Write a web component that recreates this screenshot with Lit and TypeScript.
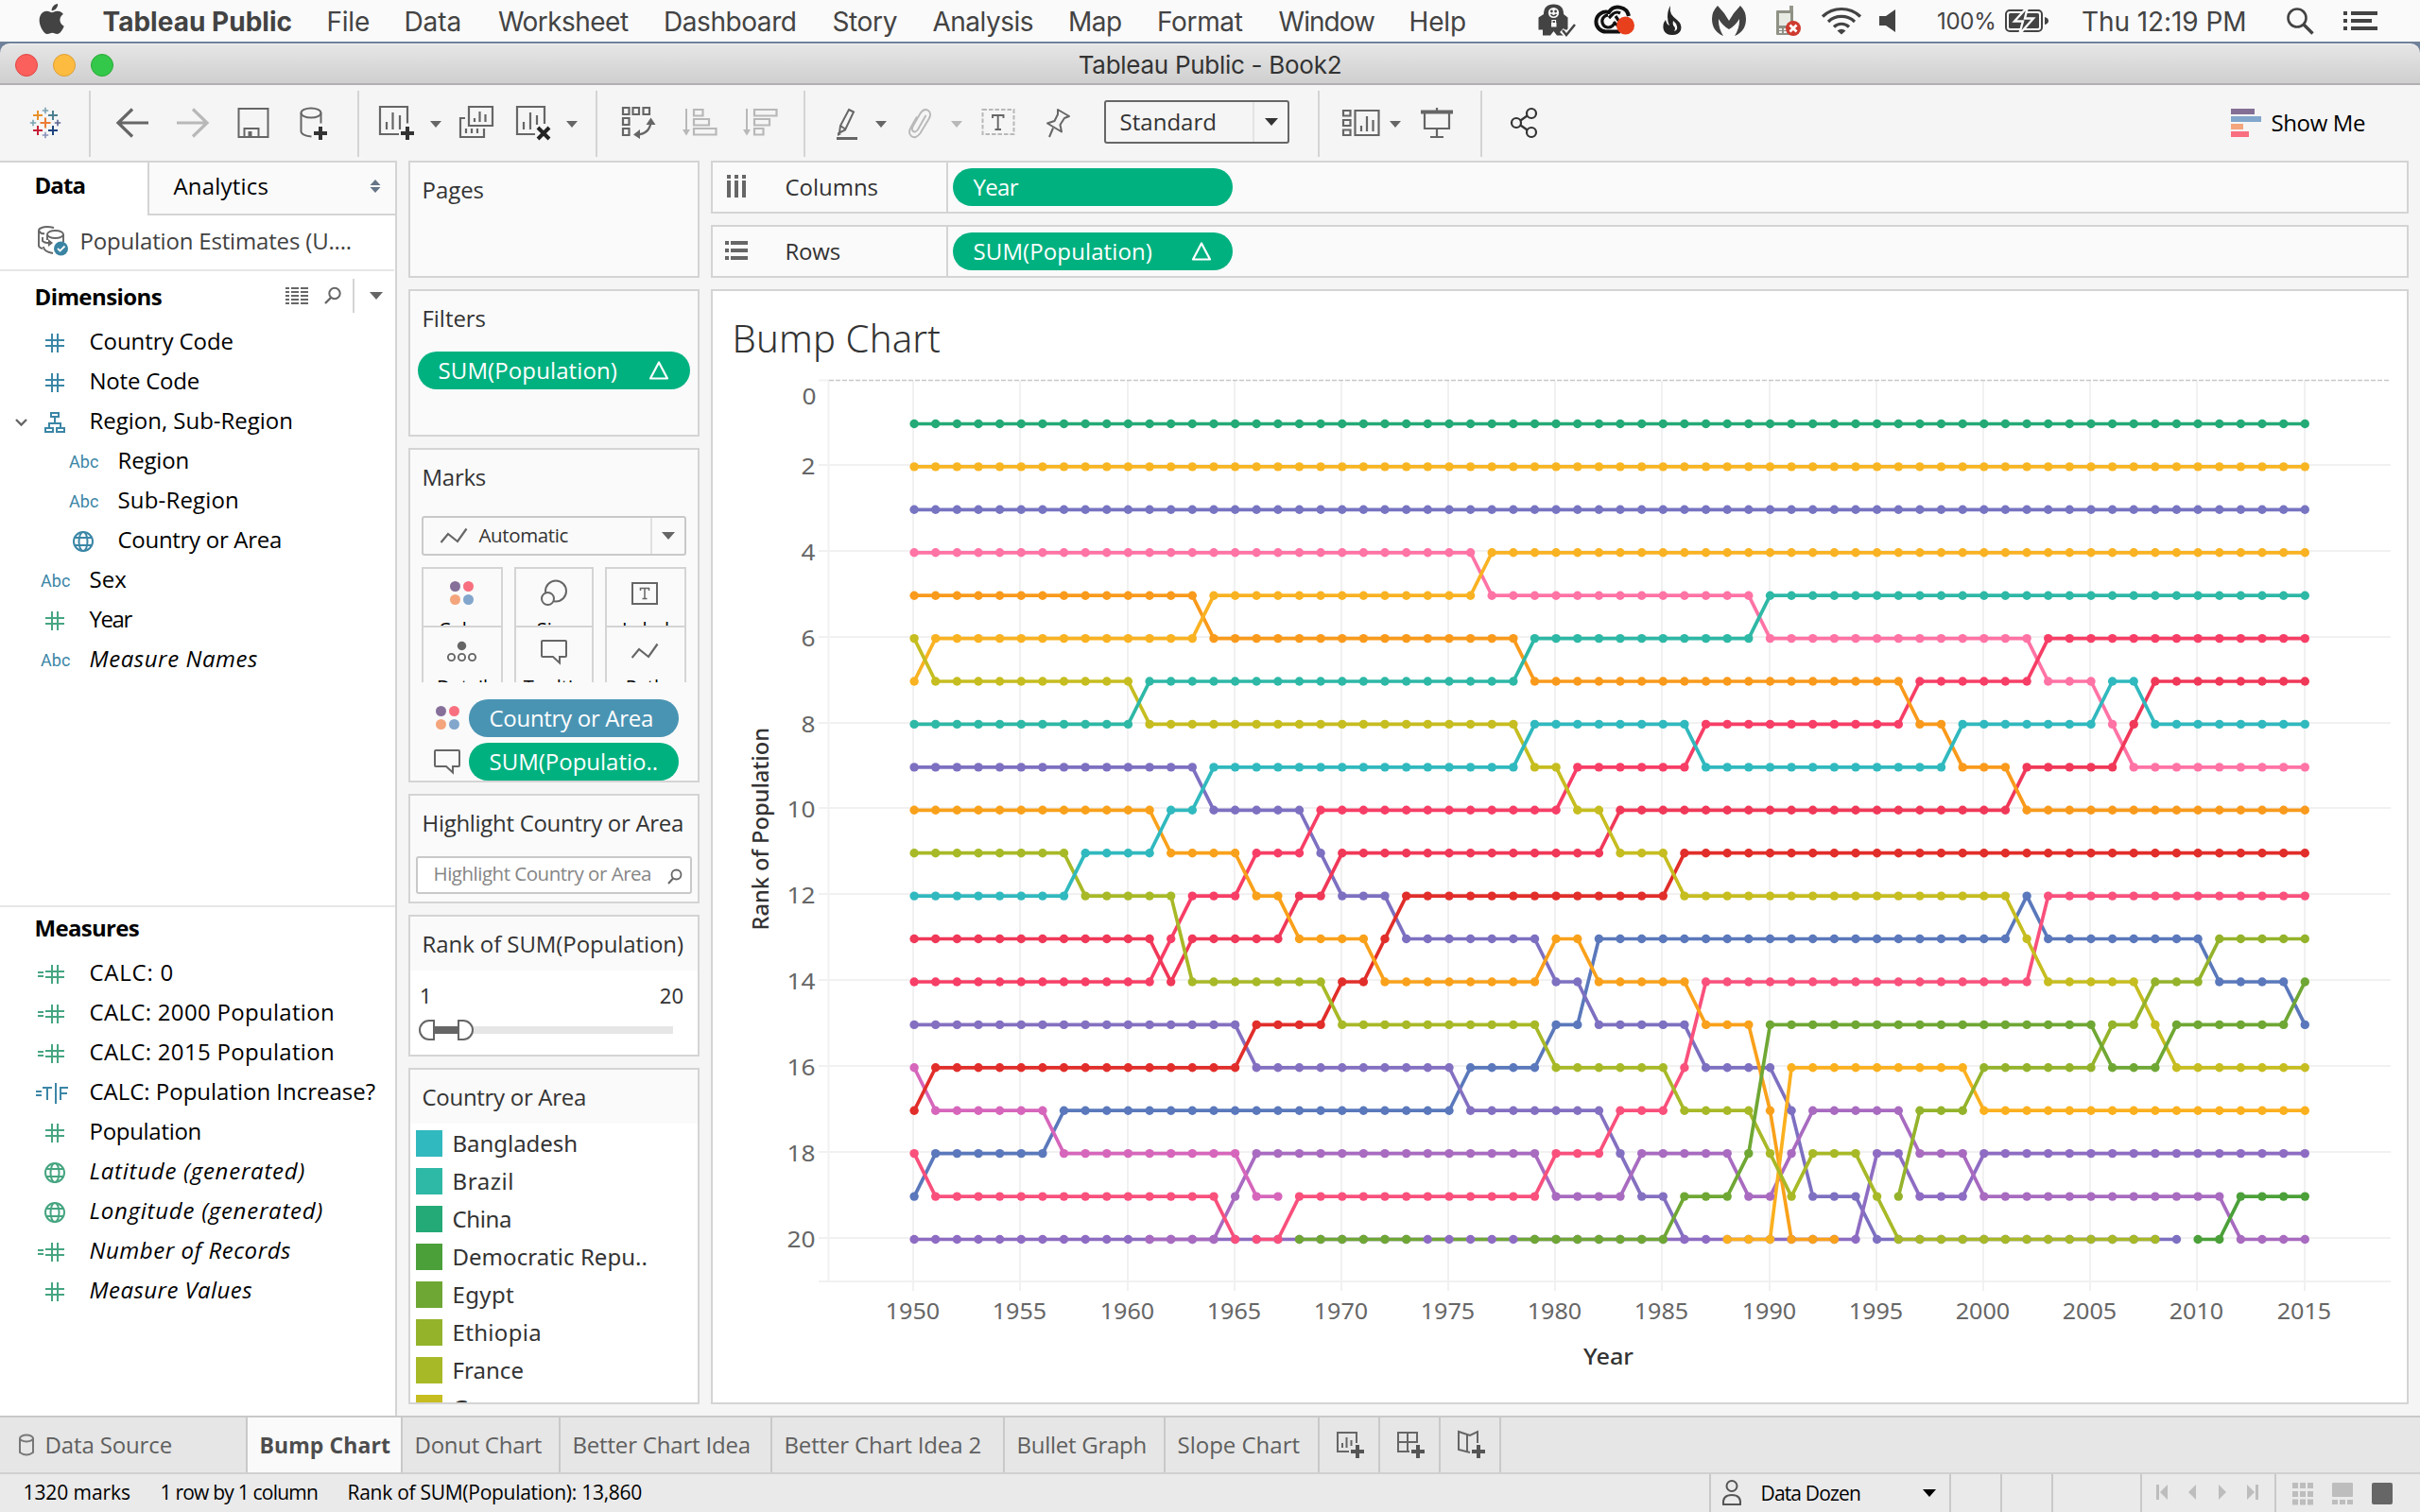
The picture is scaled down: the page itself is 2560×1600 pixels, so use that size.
import { LitElement, html, svg, css, nothing } from "lit";
import { customElement, property } from "lit/decorators.js";
import { classMap } from "lit/directives/class-map.js";

/** Inline label whose tracking is adjusted so that its letters span a given width. */
@customElement("fit-text")
class FitText extends LitElement {
  @property({ type: Number }) w = 0;

  static styles = css`
    :host { display: inline-block; white-space: pre; margin-left: 1.5px; }
  `;

  render() {
    return html`<span class="inner"><slot></slot></span>`;
  }

  firstUpdated() {
    const n = (this.textContent ?? "").length;
    const span = this.renderRoot.querySelector("span");
    if (!this.w || !span || n < 2) return;
    const natural = span.getBoundingClientRect().width;
    this.style.letterSpacing = ((this.w - 1.5 - natural) / n).toFixed(3) + "px";
  }
}

const fit = (text: string, w: number) => html`<fit-text .w=${w}>${text}</fit-text>`;

/** Icon canvas; the origin lets the shapes be written in window coordinates. */
const icon = (x: number, y: number, w: number, h: number, body: unknown) =>
  html`<svg class="icon" width=${w} height=${h} viewBox="${x} ${y} ${w} ${h}" fill="none">${body}</svg>`;

const tool = (x: number, w: number, body: unknown) => icon(x, 106, w, 48, body);
const caret = (x: number, color = "#666") =>
  tool(x, 14, svg`<path d="M${x + 1} 128h12l-6 7z" fill=${color} />`);

/* ---------- field icons, 44 x 42, centred on (22, 24) ---------- */
const hash = svg`<path d="M12 21h20M12 27h20M19 14v20M25 14v20" stroke="currentColor" stroke-width="2" />`;
const equals = svg`<path d="M4 22h6M4 26h6" stroke="currentColor" stroke-width="2" />`;
const globe = svg`<g stroke="currentColor" stroke-width="2"><circle cx="22" cy="24" r="10" /><ellipse cx="22" cy="24" rx="4.5" ry="10" /><path d="M13 20h18M13 28h18" /></g>`;
const tree = svg`<g stroke="currentColor" stroke-width="2"><rect x="18" y="14" width="8" height="4" /><rect x="12" y="30" width="8" height="4" /><rect x="24" y="30" width="8" height="4" /><path d="M22 18v6M16 30v-5h12v5" /></g>`;
const fieldIcons: Record<string, unknown> = {
  hash,
  globe,
  tree,
  calc: svg`${equals}${hash}`,
  bool: svg`<path d="M2 22h6M2 26h6M9 18h10M14 18v13M23 13v22M28 31v-13h8M28 24h7" stroke="currentColor" stroke-width="2" />`,
};

interface Field { icon: string; tone: string; name: string; w: number; depth?: number; italic?: boolean; open?: boolean }

const dimensions: Field[] = [
  { icon: "hash", tone: "blue", name: "Country Code", w: 154 },
  { icon: "hash", tone: "blue", name: "Note Code", w: 118 },
  { icon: "tree", tone: "blue", name: "Region, Sub-Region", w: 217, open: true },
  { icon: "abc", tone: "blue", name: "Region", w: 77, depth: 1 },
  { icon: "abc", tone: "blue", name: "Sub-Region", w: 130, depth: 1 },
  { icon: "globe", tone: "blue", name: "Country or Area", w: 175, depth: 1 },
  { icon: "abc", tone: "blue", name: "Sex", w: 41 },
  { icon: "hash", tone: "green", name: "Year", w: 46 },
  { icon: "abc", tone: "blue", name: "Measure Names", w: 180, italic: true },
];

const measures: Field[] = [
  { icon: "calc", tone: "green", name: "CALC: 0", w: 91 },
  { icon: "calc", tone: "green", name: "CALC: 2000 Population", w: 261 },
  { icon: "calc", tone: "green", name: "CALC: 2015 Population", w: 261 },
  { icon: "bool", tone: "blue", name: "CALC: Population Increase?", w: 304 },
  { icon: "hash", tone: "green", name: "Population", w: 120 },
  { icon: "globe", tone: "green", name: "Latitude (generated)", w: 230, italic: true },
  { icon: "globe", tone: "green", name: "Longitude (generated)", w: 249, italic: true },
  { icon: "calc", tone: "green", name: "Number of Records", w: 215, italic: true },
  { icon: "hash", tone: "green", name: "Measure Values", w: 174, italic: true },
];

@customElement("field-list")
class FieldList extends LitElement {
  @property({ attribute: false }) fields: Field[] = [];

  static styles = css`
    :host { display: block; color: #000; font-size: 24px; }
    .row { display: grid; grid-template-columns: 36px 44px 13px 1fr; height: 42px; line-height: 44px; }
    .row.nested { padding-left: 30px; }
    .italic { font-style: italic; }
    .mark { display: block; }
    .mark svg { display: block; }
    .blue { color: #3b86a6; }
    .green { color: #46a581; }
    .abc { font: 18px/48px Roboto, sans-serif; text-align: center; height: 42px; }
    .label { grid-column: 4; }
  `;

  render() {
    return this.fields.map(
      (f) => html`<div class=${classMap({ row: true, nested: !!f.depth })}>
        <span class="mark">
          ${f.open ? icon(0, 0, 36, 42, svg`<path d="M17 21l5.500 5.500l5.500 -5.500" stroke="#666" stroke-width="2.400" />`) : nothing}
        </span>
        ${f.icon === "abc"
          ? html`<span class="abc blue">${fit("Abc", 33)}</span>`
          : html`<span class="mark ${f.tone}">${icon(0, 0, 44, 42, fieldIcons[f.icon])}</span>`}
        <span class=${classMap({ label: true, italic: !!f.italic })}>${fit(f.name, f.w)}</span>
      </div>`
    );
  }
}

/* ---------- bump chart ---------- */

/** path: "year:rank" wherever the rank changes; end: last ranked year. */
interface Series { name: string; color: string; path: string; end?: number; hiddenMarks?: [number, number]; gap?: number }

const series: Series[] = [
  { name: "Bangladesh", color: "#30b9be", path: "1950:12 1958:11 1962:10 1964:9 1979:8 1987:9 1999:8 2006:7 2008:8" },
  { name: "Brazil", color: "#2eb8a6", path: "1950:8 1961:7 1979:6 1990:5" },
  { name: "China", color: "#24aa76", path: "1950:1" },
  { name: "Democratic Republic of the Congo", color: "#4ba039", path: "2010:20 2012:19" },
  { name: "Egypt", color: "#6fa734", path: "1968:20 1986:19 1989:18 1990:15 2006:16 2009:15 2015:14", hiddenMarks: [1974, 1978] },
  { name: "Ethiopia", color: "#94b32b", path: "1996:19 1997:17 2000:16 2006:15 2008:14 2011:13" },
  { name: "France", color: "#a8b927", path: "1950:11 1958:12 1963:14 1970:15 1980:16 1986:17 1990:18 1991:19 1992:18 1995:19 1996:20", end: 2008 },
  { name: "Germany", color: "#c6bd20", path: "1950:6 1951:7 1961:8 1979:9 1981:10 1983:11 1986:12 2002:13 2003:14 2008:15 2009:16" },
  { name: "India", color: "#f8b522", path: "1950:2" },
  { name: "Indonesia", color: "#f9b222", path: "1950:7 1951:6 1964:5 1977:4" },
  { name: "Iran", color: "#fbb01e", path: "1988:20 1991:16 2000:17" },
  { name: "Italy", color: "#f9a11b", path: "1950:10 1962:11 1966:12 1968:13 1972:14 1980:13 1982:14 1987:15 1990:17 1991:20", end: 1993 },
  { name: "Japan", color: "#f99a1c", path: "1950:5 1964:6 1979:7 1997:8 1999:9 2002:10" },
  { name: "Mexico", color: "#e12e2a", path: "1950:17 1951:16 1966:15 1970:14 1972:13 1973:12 1986:11" },
  { name: "Nigeria", color: "#f03858", path: "1950:13 1962:14 1963:13 1968:12 1970:11 1983:10 2002:9 2007:8 2008:7" },
  { name: "Pakistan", color: "#f73e66", path: "1950:14 1962:13 1963:12 1966:11 1969:10 1981:9 1987:8 1997:7 2003:6" },
  { name: "Philippines", color: "#f9507c", path: "1950:18 1951:19 1965:20 1968:19 1980:18 1983:17 1986:16 1987:14 2003:12", gap: 1965 },
  { name: "Russian Federation", color: "#ff73a5", path: "1950:4 1977:5 1990:6 2003:7 2006:8 2007:9" },
  { name: "Spain", color: "#d666bb", path: "1950:16 1951:17 1957:18 1966:19", end: 1967 },
  { name: "Thailand", color: "#a86bc0", path: "1961:20 1965:19 1966:18 1980:19 1984:18 1989:19 1991:18 1992:17 1997:18 2000:19 2012:20" },
  { name: "Turkey", color: "#8e6cc3", path: "1950:20 1995:18 1997:19 2000:18" },
  { name: "Ukraine", color: "#8470c1", path: "1950:15 1966:16 1976:17 1983:18 1984:19 1986:20", end: 1986 },
  { name: "United Kingdom", color: "#7d70c1", path: "1950:9 1964:10 1969:11 1970:12 1973:13 1980:14 1982:15 1987:16 1991:17 1992:19 1995:20", end: 2009 },
  { name: "United States of America", color: "#7774c2", path: "1950:3" },
  { name: "Viet Nam", color: "#5a78bb", path: "1950:19 1951:18 1957:17 1976:16 1980:15 1982:13 2002:12 2003:13 2011:14 2015:15" },
];

const X = (year: number) => 967.1 + (year - 1950) * 22.634;
const Y = (rank: number) => 448.5 + (rank - 1) * 45.42;

const expand = (s: Series) => {
  const steps = s.path.split(" ").map((p) => p.split(":").map(Number));
  const out: { year: number; rank: number }[] = [];
  for (let year = steps[0][0]; year <= (s.end ?? 2015); year++) {
    const rank = steps.filter(([y]) => y <= year).pop()![1];
    out.push({ year, rank });
  }
  return out;
};

@customElement("bump-chart")
class BumpChart extends LitElement {
  static styles = css`
    :host { display: block; }
    svg { display: block; }
    text { font-family: "Noto Sans", sans-serif; font-size: 24px; fill: #666; }
    .title { fill: #333; font-weight: 500; }
    .grid { stroke: #f1f1f1; stroke-width: 2; }
    .zero { stroke: #c8c8c8; stroke-width: 1.4; stroke-dasharray: 5 2; }
    .line { fill: none; stroke-width: 3.7; stroke-linejoin: round; }
  `;

  render() {
    const data = [...series].reverse().map((s) => ({ s, pts: expand(s) }));
    const ranks = [2, 4, 6, 8, 10, 12, 14, 16, 18, 20];
    const years = Array.from({ length: 14 }, (_, i) => 1950 + i * 5);
    return html`<svg width="1792" height="1084" viewBox="754 400 1792 1084">
      ${ranks.map((r) => {
        const y = Math.round(Y(r) - 1.9);
        return svg`<path class="grid" d="M866 ${y}H2529" />
          <text x="862.500" y=${y + 10} text-anchor="end" textLength=${r < 10 ? 15 : 30} lengthAdjust="spacingAndGlyphs">${r}</text>`;
      })}
      ${years.map((v) => {
        const x = Math.round(X(v) - 0.8);
        return svg`<path class="grid" d="M${x} 403V1366" />
          <text x=${x - 0.5} y="1396" text-anchor="middle" textLength="57.500" lengthAdjust="spacingAndGlyphs">${v}</text>`;
      })}
      <path class="grid" stroke-width="1" d="M876.500 403V1356M866 1356H2529M866 402.500H877" />
      <path class="zero" d="M877 402.500H2529" />
      <text x="863.500" y="428" text-anchor="end" textLength="15" lengthAdjust="spacingAndGlyphs">0</text>
      ${data.map(({ s, pts }) =>
        svg`<path class="line" stroke=${s.color} d=${pts
          .map((p, i) => `${i === 0 || p.year - 1 === s.gap ? "M" : "L"}${X(p.year).toFixed(1)} ${Y(p.rank).toFixed(1)}`)
          .join("")} />`
      )}
      ${data.map(({ s, pts }) =>
        svg`<g fill=${s.color}>${pts
          .filter((p) => !s.hiddenMarks || p.year < s.hiddenMarks[0] || p.year > s.hiddenMarks[1])
          .map((p) => svg`<circle cx=${X(p.year).toFixed(1)} cy=${Y(p.rank).toFixed(1)} r="4.700" />`)}</g>`
      )}
      <text class="title" transform="translate(812.500 984.500) rotate(-90)" textLength="214.500" lengthAdjust="spacingAndGlyphs">Rank of Population</text>
      <text class="title" x="1675" y="1444" textLength="53" lengthAdjust="spacingAndGlyphs">Year</text>
    </svg>`;
  }
}

/* ---------- shared small pieces ---------- */
const delta = (x: number, y: number) =>
  icon(x, y, 22, 20, svg`<path d="M${x + 2} ${y + 18.5}h18l-9 -17z" stroke="#fff" stroke-width="2.200" stroke-linejoin="round" />`);

const colorDots = svg`<circle cx="480.500" cy="620.500" r="5.500" fill="#86709a" /><circle cx="494.500" cy="620.500" r="5.500" fill="#f8707f" /><circle cx="480.500" cy="634.500" r="5.500" fill="#f4a57c" /><circle cx="494.500" cy="634.500" r="5.500" fill="#82a6cc" />`;
const bubble = svg`<path d="M574.500 678h23.500a1 1 0 0 1 1 1v15a1 1 0 0 1 -1 1h-6v6.500l-7 -6.500h-11a1 1 0 0 1 -1 -1v-15a1 1 0 0 1 1 -1z" stroke="#666" stroke-width="2" />`;

const lens = (stroke: string) => icon(0, 0, 20, 20, svg`<circle cx="12" cy="7.500" r="5.700" stroke=${stroke} stroke-width="2" /><path d="M8 12L2 18" stroke=${stroke} stroke-width="2.400" />`);

const legend: [string, string, number][] = [
  ["Bangladesh", "#30b9be", 134],
  ["Brazil", "#2eb8a6", 67],
  ["China", "#24aa76", 64],
  ["Democratic Repu..", "#4ba039", 208],
  ["Egypt", "#6fa734", 67],
  ["Ethiopia", "#94b32b", 96],
  ["France", "#a8b927", 77],
  ["Germany", "#c6bd20", 102],
];

const menus: [string, number][] = [
  ["File", 47], ["Data", 62], ["Worksheet", 139], ["Dashboard", 142], ["Story", 70],
  ["Analysis", 108], ["Map", 58], ["Format", 92], ["Window", 103], ["Help", 62],
];

const sheets: [string, number, number][] = [
  ["Donut Chart", 136, 167],
  ["Better Chart Idea", 190, 224],
  ["Better Chart Idea 2", 210, 246],
  ["Bullet Graph", 139, 170],
  ["Slope Chart", 131, 163],
];

@customElement("app-root")
class AppRoot extends LitElement {
  static styles = css`
    :host {
      display: flex; flex-direction: column; width: 2560px; height: 1600px; overflow: hidden;
      background: #f5f5f5; color: #333; font: 24px/1 "Open Sans", "Noto Sans", sans-serif;
    }
    * { box-sizing: border-box; }
    .icon { display: block; flex: none; }

    .menubar {
      flex: none; height: 44px; background: #fafafa; color: #434343; padding-left: 40px;
      display: grid; align-items: center; font: 28px/44px Inter, sans-serif;
      grid-template-columns: 68.5px 237px 82px 99.5px 175px 178.5px 106px 143.5px 94px 128.5px 138px 134.5px 61px 71px 52px 68px 48px 61px 63px 70px 83px 216px 59px 1fr;
    }
    .menubar > span { margin-left: -1.5px; padding-top: 1px; height: 44px; }
    .menubar .app { font-weight: 700; }
    .menubar .charge { font-size: 24px; }
    .desktop { flex: none; height: 46px; background: #708299; padding-top: 2px; }
    .titlebar {
      height: 44px; border-radius: 10px 10px 0 0; border-bottom: 2px solid #b1afb1; border-top: 1px solid #f2f2f2;
      background: linear-gradient(#e6e6e6, #cfcfcf); display: grid; grid-template-columns: 1fr auto 1fr; align-items: center;
      font: 26px/40px Inter, sans-serif; color: #333;
    }
    .titlebar fit-text { padding-top: 2px; margin-left: 0; }
    .lights { display: flex; gap: 16px; padding-left: 16px; padding-top: 2px; }
    .light { width: 24px; height: 24px; border-radius: 50%; background: #fc605c; border: 1px solid #df4744; }
    .light.min { background: #fdbc40; border-color: #de9f34; }
    .light.max { background: #34c84a; border-color: #27aa35; }

    .toolbar {
      flex: none; height: 80px; padding-left: 31px; display: grid; align-items: center;
      grid-template-columns: 63px 28px 64px 64px 64px 64px 22px 54px 31px 60px 53px 32px 27px 64px 64px 65px 34px 41px 35px 45px 33px 67px 63px 226px 25px 50px 33px 64px 31px 762px 1fr;
    }
    .sep { width: 2px; height: 70px; background: #d4d4d4; margin-top: 2px; }
    .select { display: flex; align-items: center; border: 2px solid #666; border-radius: 3px; width: 196px; height: 46px; color: #333; margin-top: -2px; }
    .select .value { flex: 1; padding: 0 0 0 13px; }
    .select .drop { width: 37px; height: 42px; border-left: 2px solid #e3e3e3; display: flex; align-items: center; justify-content: center; }
    .showme { display: flex; gap: 8px; align-items: center; color: #000; }

    .body { flex: 1; min-height: 0; display: flex; gap: 12px; padding: 0 12px 0 0; }
    .data-pane { width: 420px; flex: none; background: #fff; border: solid #d4d4d4; border-width: 2px 2px 0 0; display: flex; flex-direction: column; color: #000; }
    .tabs { display: flex; height: 56px; }
    .tab { width: 156px; padding-left: 35px; line-height: 48px; font-weight: 700; }
    .tab.other { flex: 1; display: flex; justify-content: space-between; font-weight: 400; background: #fafafa; border: solid #d4d4d4; border-width: 0 0 2px 2px; padding: 0 15px 0 24px; line-height: 50px; }
    .updown { margin-top: 17px; }
    .source { display: flex; align-items: center; height: 59px; border-bottom: 2px solid #e6e6e6; padding: 0 0 3px 38px; gap: 9px; color: #414141; margin-right: 1px; }
    .section-head { display: flex; align-items: center; height: 52px; padding-left: 35px; font-weight: 700; }
    .section-head > fit-text { padding-top: 2px; }
    .head-tools { display: flex; align-items: center; margin-left: auto; padding-right: 13px; gap: 16px; }
    .rule { width: 2px; height: 36px; background: #d4d4d4; margin-left: -5px; }
    .dims { height: 673px; display: flex; flex-direction: column; border-bottom: 2px solid #e6e6e6; flex: none; }
    .measures .section-head { height: 44px; margin-bottom: 3px; }
    .measures .section-head > fit-text { padding-top: 0; }

    .cards { width: 308px; flex: none; display: flex; flex-direction: column; gap: 12px; padding-bottom: 12px; }
    .card { border: 2px solid #d4d4d4; background: #fafafa; overflow: hidden; flex: none; }
    .card-title { height: 57px; line-height: 57px; padding-left: 11px; white-space: nowrap; color: #333; }
    .pages { height: 124px; } .filters { height: 156px; } .marks { height: 354px; } .highlight { height: 116px; } .rank { height: 150px; } .legend { height: 356px; }
    .pill { height: 40px; border-radius: 20px; background: #00b180; color: #fff; display: flex; align-items: center; justify-content: space-between; padding: 0 22px 1px 20px; }
    .filters .pill { margin: 7px 8px 0; }
    .mark-type { margin: 13px 12px 0; height: 42px; border: 2px solid #c9c9c9; border-radius: 3px; display: flex; align-items: center; font-size: 20.500px; }
    .mark-type .value { flex: 1; padding: 0 0 2px 9px; }
    .mark-type .drop { width: 36px; height: 38px; border-left: 2px solid #e0e0e0; display: flex; align-items: center; justify-content: center; }
    .mark-type .icon.path { margin-left: 16px; }
    .buttons { margin: 12px 12px 0; display: grid; grid-template-columns: 86px 84px 86px; grid-template-rows: 62px 60px; column-gap: 12px; }
    .button { border: solid #d4d4d4; border-width: 2px 2px 0; overflow: hidden; text-align: center; font-size: 20px; line-height: 28px; color: #000; }
    .button .icon { margin: 0 auto -1px; }
    .encodings { margin-top: 18px; display: flex; flex-direction: column; gap: 6px; padding: 0 20px 0 24px; }
    .encoding { display: flex; align-items: center; gap: 8px; }
    .encoding .pill { flex: 1; }
    .pill.dim { background: #4a94b3; }
    .search { margin: 7px 6px 0; height: 40px; border: 2px solid #c9c9c9; border-radius: 3px; background: #fff; display: flex; align-items: center; justify-content: space-between; padding: 0 8px 0 15px; font-size: 20.500px; color: #858585; }
    .search fit-text { padding-bottom: 3px; }
    .search .icon { margin-top: 3px; }
    .plain { background: #fff; height: 100%; font-family: "Noto Sans", sans-serif; }
    .range { display: flex; justify-content: space-between; padding: 13px 15px 0 10px; font-size: 22px; line-height: 26px; height: 51px; }
    .slider { padding-left: 8px; }
    .legend .plain { padding: 7px 0 0 6px; font-size: 24px; }
    .entry { display: flex; align-items: center; height: 28px; margin-bottom: 12px; gap: 9px; line-height: 30px; }
    .swatch { width: 28px; height: 28px; }

    .main { flex: 1; min-width: 0; display: flex; flex-direction: column; gap: 12px; padding-bottom: 12px; }
    .shelf { flex: none; height: 56px; border: 2px solid #d4d4d4; background: #fafafa; display: grid; grid-template-columns: 75px 172px 1fr; align-items: center; }
    .shelf > .icon { margin-left: 11px; }
    .shelf .drop-zone { height: 52px; border-left: 2px solid #d4d4d4; padding: 6px 5px; }
    .shelf .pill { width: 296px; }
    .sheet { flex: 1; border: 2px solid #d4d4d4; background: #fff; overflow: hidden; }
    .sheet-title { height: 92px; padding: 7px 0 0 19px; line-height: 86px; font-family: "Noto Sans", sans-serif; font-weight: 300; font-size: 40px; color: #333; }

    .sheet-tabs { flex: none; height: 62px; border: solid #c9c9c9; border-width: 2px 0; border-bottom-color: #d0d0d0; background: #e6e6e6; display: flex; color: #5f5f5f; line-height: 58px; }
    .sheet-tab { border-right: 2px solid #c9c9c9; padding-left: 11px; flex: none; display: flex; align-items: center; gap: 8px; }
    .sheet-tab.data { width: 262px; padding-left: 18px; }
    .sheet-tab.current { width: 164px; background: #fafafa; color: #4d4d4d; font-weight: 700; font-size: 23px; }
    .sheet-tab.add { width: 64px; padding-left: 17px; }
    .status { flex: none; height: 40px; background: #eaeaea; display: flex; align-items: stretch; color: #000; font-size: 21px; line-height: 38px; padding-left: 23px; }
    .facts { width: 1785px; display: flex; gap: 30px; flex: none; }
    .cell { border-left: 2px solid #c9c9c9; display: flex; align-items: center; flex: none; }
    .user { width: 254px; padding: 0 14px 0 10px; gap: 17px; }
    .user .icon:last-child { margin-left: auto; }
    .empty { width: 54px; }
    .wide { width: 94px; }
    .nav { width: 142px; padding-left: 14px; }
    .views { padding-left: 16px; flex: 1; }
  `;

  private menubar() {
    const c = "#434343";
    return html`<nav class="menubar">
      ${icon(40, 0, 30, 44, svg`<g transform="translate(38.700 4) scale(1.333)" fill=${c}><path d="M12.152 6.896c-.948 0-2.415-1.078-3.960-1.040-2.040.027-3.910 1.183-4.961 3.014-2.117 3.675-.546 9.103 1.519 12.090 1.013 1.454 2.208 3.090 3.792 3.039 1.520-.065 2.090-.987 3.935-.987 1.831 0 2.350.987 3.960.948 1.637-.026 2.676-1.480 3.676-2.948 1.156-1.688 1.636-3.325 1.662-3.415-.039-.013-3.182-1.221-3.220-4.857-.026-3.040 2.480-4.494 2.597-4.559-1.429-2.090-3.623-2.324-4.390-2.376-2-.156-3.675 1.090-4.610 1.090zM15.530 3.830c.843-1.012 1.400-2.427 1.245-3.830-1.207.052-2.662.805-3.532 1.818-.780.896-1.454 2.338-1.273 3.714 1.338.104 2.715-.688 3.559-1.701" /></g>`)}
      <span class="app">${fit("Tableau Public", 202)}</span>
      ${menus.map(([name, w]) => html`<span>${fit(name, w)}</span>`)}
      ${icon(1624, 0, 44, 44, svg`<path d="M1632 15q0 -10.500 10.500 -10.500t10.500 10.500l4.500 3.500v13h-3.500v6h-8l-3.500 -4.500l-3.500 4.500h-8v-6h-4.500v-13z" fill=${c} /><circle cx="1642.500" cy="13.500" r="5.600" fill="#fafafa" /><circle cx="1640.400" cy="12" r="1.400" fill=${c} /><circle cx="1644.600" cy="12" r="1.400" fill=${c} /><path d="M1639.500 15q3 3.500 6 0" stroke=${c} stroke-width="1.600" /><path d="M1640 24h5.500v4.500h-5.500z" fill="#fafafa" /><path d="M1641 24v-2.500h3.500v2.500" stroke="#fafafa" stroke-width="1.200" /><path d="M1651 32l5 5l9 -11" stroke="#fafafa" stroke-width="5.500" /><path d="M1652 32l4 5l9 -11" stroke=${c} stroke-width="2.500" />`)}
      ${icon(1685, 0, 46, 44, svg`<g stroke="#111" stroke-width="4"><path d="M1722 17a11.500 11.500 0 0 0 -21 -4a10.500 10.500 0 1 0 -2 20.500h14" /><path d="M1713 14a7 7 0 0 0 -9 2l-3 3M1700 16a6.500 6.500 0 1 0 4.500 11.500l3 -3M1708 17l8 12" stroke-width="3.200" /><path d="M1711 28l-5 -5" stroke-width="3" /></g><circle cx="1718.500" cy="27" r="9.500" fill="#e8401c" />`)}
      ${icon(1756, 0, 24, 44, svg`<path d="M1766 6q-1 5 1 9q2 3 6 6q6 5 4 11q-2 5 -9 5q-7 0 -9 -5q-2 -6 2 -11q1 5 4 6q-2 -4 -2 -9q0 -7 3 -12z" fill="#262626" /><path d="M1769 22q-1 4 1 6t0 5q4 -1 3 -5t-4 -6z" fill="#fafafa" />`)}
      ${icon(1808, 0, 40, 44, svg`<path d="M1816 6q-6 6 -6 14q0 13 12 18q-5 -8 -5 -16v-2q4 7 11 11q7 -4 11 -11v2q0 8 -5 16q12 -5 12 -18q0 -8 -6 -14q-7 7 -12 16q-5 -9 -12 -16z" fill=${c} />`)}
      ${icon(1876, 0, 30, 44, svg`<path d="M1892 6h4v6h-4z" fill="#94978b" /><rect x="1878" y="11" width="18" height="26" rx="1" fill="#8e9184" /><rect x="1881" y="14" width="12" height="13" fill="#e8ebe4" /><path d="M1881 31h3M1886 31h3M1881 34h3M1886 34h3" stroke="#eee" stroke-width="2" /><circle cx="1896" cy="30" r="8" fill="#cf3a2e" /><path d="M1892.500 26.500l7 7m0 -7l-7 7" stroke="#fff" stroke-width="2.800" />`)}
      ${icon(1924, 0, 46, 44, svg`<g stroke=${c} stroke-width="3.200"><path d="M1927 17.500a29 29 0 0 1 40 0" /><path d="M1933 23a20.500 20.500 0 0 1 28 0" /><path d="M1939 28.500a11.500 11.500 0 0 1 16 0" /></g><path d="M1942.500 32.500q4.500 -3.500 9 0l-4.500 4z" fill=${c} />`)}
      ${icon(1985, 0, 22, 44, svg`<path d="M1987 17h7l10 -7v24l-10 -7h-7z" fill=${c} />`)}
      <span class="charge">${fit("100%", 64)}</span>
      ${icon(2118, 0, 50, 44, svg`<rect x="2121" y="11" width="38" height="22" rx="4" stroke=${c} stroke-width="2" /><rect x="2124" y="14" width="32" height="16" rx="1.500" fill=${c} /><path d="M2162 18q4 1 4 4t-4 4z" fill=${c} /><path d="M2144 7l-14 15.500h9l-4 14l15 -17h-9z" fill=${c} stroke="#fafafa" stroke-width="2.400" />`)}
      <span>${fit("Thu 12:19 PM", 176)}</span>
      ${icon(2417, 0, 32, 44, svg`<circle cx="2429" cy="19" r="9.500" stroke=${c} stroke-width="2.600" /><path d="M2435.500 25.500l10 10" stroke=${c} stroke-width="3.400" />`)}
      ${icon(2476, 0, 40, 44, svg`<path d="M2478 14h4M2478 22h4M2478 30h4M2486 14h28M2486 22h22M2486 30h28" stroke=${c} stroke-width="4" />`)}
    </nav>`;
  }

  private toolbar() {
    const g = "#666";
    const l = "#b8b8b8";
    const sep = html`<span class="sep"></span>`;
    const plus = (x: number, y: number, col: string, s: number, w: number) =>
      svg`<path d="M${x - s} ${y}h${2 * s}M${x} ${y - s}v${2 * s}" stroke=${col} stroke-width=${w} />`;
    return html`<div class="toolbar">
      ${tool(31, 34, svg`${plus(48, 130, "#eb7b35", 5.5, 2)}${plus(40, 122, "#e8912d", 5, 2)}${plus(56, 122, "#4c8090", 5, 2)}${plus(40, 138, "#c72037", 5, 2)}${plus(56, 138, "#1f457e", 5, 2)}${plus(48, 117, "#7ba2b1", 3.2, 1.6)}${plus(48, 143, "#8891b8", 3.2, 1.6)}${plus(35, 130, "#7ba2b1", 3.2, 1.6)}${plus(61, 130, "#5c6692", 3.2, 1.6)}`)}
      ${sep}
      ${tool(122, 36, svg`<path d="M157 130h-32M140 115.500l-15 14.500l15 14.500" stroke=${g} stroke-width="3.200" />`)}
      ${tool(186, 36, svg`<path d="M187 130h32M204 115.500l15 14.500l-15 14.500" stroke=${l} stroke-width="3.200" />`)}
      ${tool(250, 36, svg`<g stroke=${g} stroke-width="2"><path d="M252.500 115h31v30h-31z" /><path d="M258.500 145v-9h15v9M263.500 145v-5h2v5" /></g>`)}
      ${tool(314, 36, svg`<g stroke=${g} stroke-width="2"><ellipse cx="329" cy="119.500" rx="10.500" ry="5" /><path d="M318.500 119.500v20q1 4 11 5M339.500 119.500v11" /></g>${plus(339, 141, "#333", 7, 4)}`)}
      ${sep}
      ${tool(400, 40, svg`<path d="M431 130.500v-17.500h-29v29h20M409 137v-8M415.500 137v-18M423 137v-15" stroke=${g} stroke-width="2.200" />${plus(431, 141, "#333", 7, 4)}`)}
      ${caret(454)}
      ${tool(485, 38, svg`<g stroke=${g} stroke-width="2.200"><path d="M496 113h25v20h-25zM502 129v-4M507.500 129v-11M513.500 129v-8" /><path d="M492 125h-5v20h25v-9M493 141v-5M499 141v-5M505 141v-5" /></g>`)}
      ${tool(545, 40, svg`<path d="M576 131v-18h-29v29h19M554 137v-8M561 137v-18M568 132v-10" stroke=${g} stroke-width="2.200" /><path d="M569 135l12 12m0 -12l-12 12" stroke="#222" stroke-width="4" />`)}
      ${caret(598)}
      ${sep}
      ${tool(657, 38, svg`<g stroke=${g} stroke-width="2.200"><path d="M659 114h6.500v7h-6.500zM669.500 114h6.500v7h-6.500zM680.500 114h6.500v7h-6.500zM659 125h6.500v7h-6.500zM659 136h6.500v7h-6.500z" /><path d="M674 142.500q13 -1 14.500 -13" /></g><path d="M688.500 124.500l5 7.500h-10zM670 142.500l7 -5.500v10z" fill=${g} />`)}
      ${tool(721, 38, svg`<path d="M726 115v24" stroke=${l} stroke-width="2" /><path d="M722 137h8l-4 6.500z" fill=${l} /><path d="M734 116h9.500v6.500h-9.500zM734 126h16v6.500h-16zM734 136h23.500v6.500h-23.500z" stroke=${l} stroke-width="2.200" />`)}
      ${tool(785, 38, svg`<path d="M790 115v24" stroke=${l} stroke-width="2" /><path d="M786 137h8l-4 6.500z" fill=${l} /><path d="M798 116h23.500v6.500h-23.500zM798 126h16v6.500h-16zM798 136h9.500v6.500h-9.500z" stroke=${l} stroke-width="2.200" />`)}
      ${sep}
      ${tool(884, 26, svg`<g stroke=${g} stroke-width="2"><path d="M898 116l5 2.500l-9 19l-6 3l1 -7.500zM889 133l5 3.500" /><path d="M885 146.500h22" stroke-width="3" /></g><path d="M886 140l4 2l-4 2z" fill=${g} />`)}
      ${caret(924)}
      ${tool(960, 26, svg`<path d="M979.500 122l-8.500 15q-3 4 -5.500 1.500q-1.500 -2 0.500 -5.500l7.500 -13q4 -6 8.500 -3q4 3 0.500 9l-9 15q-5 6.500 -9.500 3q-4 -3.500 0 -10l6 -10.500" stroke=${l} stroke-width="1.900" />`)}
      ${caret(1004, l)}
      ${tool(1038, 36, svg`<rect x="1039.500" y="116" width="33" height="26" stroke=${l} stroke-width="2" stroke-dasharray="4.500 2" /><path d="M1050 125v-3h11.500v3M1055.700 122v15M1052.500 137h6.500" stroke=${g} stroke-width="1.900" />`)}
      ${tool(1105, 28, svg`<path d="M1119 116l12 7l-5 2l-4.500 7l1.500 7.500l-15 -9l7.500 -2.500l3.500 -7zM1114 135.500l-4 9.500" stroke=${g} stroke-width="2" stroke-linejoin="round" />`)}
      <div class="select"><span class="value">${fit("Standard", 104)}</span><span class="drop">${icon(0, 0, 16, 10, svg`<path d="M1 1h14l-7 8z" fill="#333" />`)}</span></div>
      ${sep}
      ${tool(1419, 42, svg`<g stroke=${g} stroke-width="2.200"><path d="M1421 117h7.500v5.500h-7.500zM1421 127h7.500v6h-7.500zM1421 137.500h7.500v5.500h-7.500zM1433.500 117h25v26h-25z" /><path d="M1440 139v-6M1446 139v-16M1452.500 139v-12" /></g>`)}
      ${caret(1468)}
      ${tool(1502, 36, svg`<path d="M1503 118.500h34" stroke=${g} stroke-width="4" /><path d="M1507 120v16h26v-16M1520 114v3M1520 136v9M1513 145h14" stroke=${g} stroke-width="2.200" />`)}
      ${sep}
      ${tool(1597, 32, svg`<g stroke="#333" stroke-width="2.200"><circle cx="1604" cy="130" r="5" /><circle cx="1620" cy="120" r="5" /><circle cx="1620" cy="140" r="5" /><path d="M1608.500 127.500l7 -5M1608.500 132.500l7 5" /></g>`)}
      <div class="showme">
        ${tool(2359, 34, svg`<path d="M2360 118h25" stroke="#836f96" stroke-width="6" /><path d="M2360 126h32" stroke="#82a6cc" stroke-width="6" /><path d="M2360 134h13" stroke="#f4a57c" stroke-width="6" /><path d="M2360 142h19" stroke="#f8707f" stroke-width="6" />`)}
        ${fit("Show Me", 101)}
      </div>
    </div>`;
  }

  private dataPane() {
    return html`<section class="data-pane">
      <div class="tabs">
        <div class="tab">${fit("Data", 55)}</div>
        <div class="tab other">${fit("Analytics", 102)}<span class="updown">${icon(0, 0, 12, 16, svg`<path d="M0.500 7l5.500 -6l5.500 6zM0.500 9l5.500 6l5.500 -6z" fill="#667587" />`)}</span></div>
      </div>
      <div class="source">
        ${icon(38, 238, 36, 36, svg`<g stroke="#666" stroke-width="1.900"><path d="M57 242q-8 -2 -13 0q-3 1 -3 3v16q0 2 4 3M41 245q2 4 6 3M45 252v4q2 2 5 2h3M46 262q0 5 10 7" /><ellipse cx="58.500" cy="249" rx="8.500" ry="4" /><path d="M50 249v6M67 249v8" /></g><path d="M51 254l5 4l-5 4z" fill="#666" /><circle cx="64.500" cy="264" r="7.500" fill="#3a84a3" /><path d="M61 264l2.500 2.500l5 -5" stroke="#fff" stroke-width="1.800" />`)}
        ${fit("Population Estimates (U....", 289)}
      </div>
      <div class="dims">
        <div class="section-head">
          ${fit("Dimensions", 136)}
          <div class="head-tools">
            ${icon(0, 0, 24, 20, svg`<path d="M0 2h4M6 2h8M16 2h8M0 6h4M6 6h8M16 6h8M0 10h4M6 10h8M16 10h8M0 14h4M6 14h8M16 14h8M0 18h4M6 18h8M16 18h8" stroke="#666" stroke-width="2" />`)}
            ${lens("#666")}
            <span class="rule"></span>
            ${icon(0, 0, 14, 8, svg`<path d="M0 0h14l-7 8z" fill="#666" />`)}
          </div>
        </div>
        <field-list .fields=${dimensions}></field-list>
      </div>
      <div class="measures">
        <div class="section-head">${fit("Measures", 112)}</div>
        <field-list .fields=${measures}></field-list>
      </div>
    </section>`;
  }

  private cards() {
    const zig = svg`<path d="M668.500 696l7.500 -9l10 8l9.500 -13.500" stroke="#666" stroke-width="2.200" />`;
    const buttons: [string, unknown][] = [
      ["Color", icon(473, 602, 30, 51, colorDots)],
      ["Size", icon(571, 602, 30, 51, svg`<g stroke="#666" stroke-width="2"><circle cx="588" cy="625.500" r="11" /><circle cx="579.500" cy="633.500" r="6.500" fill="#fafafa" /></g>`)],
      ["Label", icon(668, 602, 30, 51, svg`<rect x="669" y="617" width="26" height="22" stroke="#666" stroke-width="2" /><path d="M677.500 625v-2.500h9v2.500M682 622.500v11M679.500 633.500h5" stroke="#666" stroke-width="1.500" />`)],
      ["Detail", icon(472, 664, 33, 50, svg`<circle cx="487.500" cy="683.500" r="4.700" fill="#666" /><g stroke="#666" stroke-width="1.900"><circle cx="476.500" cy="695.500" r="3.600" /><circle cx="487.500" cy="695.500" r="3.600" /><circle cx="498.500" cy="695.500" r="3.600" /></g>`)],
      ["Tooltip", icon(571, 664, 30, 50, bubble)],
      ["Path", icon(668, 664, 30, 50, zig)],
    ];
    return html`<section class="cards">
      <div class="card pages"><div class="card-title">${fit("Pages", 67)}</div></div>
      <div class="card filters">
        <div class="card-title">${fit("Filters", 69)}</div>
        <div class="pill">${fit("SUM(Population)", 191)}${delta(0, 0)}</div>
      </div>
      <div class="card marks">
        <div class="card-title">${fit("Marks", 69)}</div>
        <div class="mark-type">
          <span class="icon path">${icon(666, 679, 32, 20, zig)}</span>
          <span class="value">${fit("Automatic", 96)}</span>
          <span class="drop">${icon(0, 0, 14, 8, svg`<path d="M0 0h14l-7 8z" fill="#666" />`)}</span>
        </div>
        <div class="buttons">${buttons.map(([name, art]) => html`<div class="button">${art}${name}</div>`)}</div>
        <div class="encodings">
          <div class="encoding">${icon(472, 613, 30, 30, colorDots)}<span class="pill dim">${fit("Country or Area", 175)}</span></div>
          <div class="encoding">${icon(571, 675, 30, 30, bubble)}<span class="pill">${fit("SUM(Populatio..", 180)}</span></div>
        </div>
      </div>
      <div class="card highlight">
        <div class="card-title">${fit("Highlight Country or Area", 278)}</div>
        <div class="search">${fit("Highlight Country or Area", 232)}${icon(0, 0, 17, 17, svg`<circle cx="10.500" cy="6.500" r="5" stroke="#666" stroke-width="1.800" /><path d="M7 10.500L2 16" stroke="#666" stroke-width="2" />`)}</div>
      </div>
      <div class="card rank">
        <div class="card-title">${fit("Rank of SUM(Population)", 278)}</div>
        <div class="plain">
          <div class="range"><span>1</span><span>20</span></div>
          <div class="slider">
            ${icon(442, 1078, 272, 24, svg`<path d="M500 1090h212" stroke="#e6e6e6" stroke-width="8" /><path d="M459 1090h26" stroke="#666" stroke-width="8" /><g fill="#fff" stroke="#666" stroke-width="2"><path d="M459 1080v20h-5a10 10 0 0 1 0 -20z" /><path d="M485 1080v20h5a10 10 0 0 0 0 -20z" /></g>`)}
          </div>
        </div>
      </div>
      <div class="card legend">
        <div class="card-title">${fit("Country or Area", 175)}</div>
        <div class="plain">
          ${legend.map(([name, color, w]) => html`<div class="entry"><span class="swatch" style="background:${color}"></span>${fit(name, w)}</div>`)}
        </div>
      </div>
    </section>`;
  }

  private main() {
    return html`<section class="main">
      <div class="shelf">
        ${icon(765, 184, 28, 28, svg`<path d="M771 189v20M779 189v20M787 189v20M771 185v4M779 185v4M787 185v4" stroke="#666" stroke-width="4" /><path d="M768 190h22" stroke="#fafafa" stroke-width="2" />`)}
        ${fit("Columns", 100)}
        <div class="drop-zone"><div class="pill">${fit("Year", 49)}</div></div>
      </div>
      <div class="shelf">
        ${icon(765, 252, 28, 28, svg`<path d="M767 257h4M767 265h4M767 273h4M773 257h18M773 265h18M773 273h18" stroke="#666" stroke-width="4" />`)}
        ${fit("Rows", 60)}
        <div class="drop-zone"><div class="pill">${fit("SUM(Population)", 191)}${delta(0, 0)}</div></div>
      </div>
      <div class="sheet">
        <div class="sheet-title">${fit("Bump Chart", 222)}</div>
        <bump-chart></bump-chart>
      </div>
    </section>`;
  }

  private footer() {
    const plus = svg`<path d="M20 26h14M27 19v14" stroke="#555" stroke-width="4" />`;
    const adds = [
      svg`<path d="M26 17v-11h-20v20h12M11 22v-5M15.500 22v-11M20.500 20v-6" stroke="#666" stroke-width="2" />`,
      svg`<path d="M26 17v-11h-20v20h12M6 16h20M16 6v20" stroke="#666" stroke-width="2" />`,
      svg`<path d="M26 17v-12l-8 4l-12 -4v19l12 3M15 8v18" stroke="#666" stroke-width="2" />`,
    ];
    return html`<div class="sheet-tabs">
        <div class="sheet-tab data">${icon(18, 1514, 20, 28, svg`<ellipse cx="28" cy="1521" rx="7" ry="3.500" stroke="#777" stroke-width="2" /><path d="M21 1521v15q7 5 14 0v-15" stroke="#777" stroke-width="2" />`)}${fit("Data Source", 136)}</div>
        <div class="sheet-tab current">${fit("Bump Chart", 140)}</div>
        ${sheets.map(([name, w, size]) => html`<div class="sheet-tab" style="width:${size}px">${fit(name, w)}</div>`)}
        ${adds.map((a) => html`<div class="sheet-tab add">${icon(4, 2, 36, 34, svg`${a}${plus}`)}</div>`)}
      </div>
      <div class="status">
        <div class="facts">${fit("1320 marks", 115)}${fit("1 row by 1 column", 168)}${fit("Rank of SUM(Population): 13,860", 313)}</div>
        <div class="cell user">
          ${icon(1820, 1563, 24, 32, svg`<circle cx="1832" cy="1571.500" r="5.500" stroke="#555" stroke-width="2" /><path d="M1823 1591q-1 -10 9 -10t9 10z" stroke="#555" stroke-width="2" />`)}
          ${fit("Data Dozen", 107)}
          ${icon(0, 0, 14, 8, svg`<path d="M0 0h14l-7 8z" fill="#000" />`)}
        </div>
        <div class="cell empty"></div>
        <div class="cell empty"></div>
        <div class="cell wide"></div>
        <div class="cell nav">${icon(2281, 1564, 112, 32, svg`<path d="M2282 1571h3v16h-3zM2294 1571v16l-8 -8zM2324 1571v16l-8 -8zM2348 1571v16l8 -8zM2378 1571v16l8 -8zM2387 1571h3v16h-3z" fill="#bdbdbd" />`)}</div>
        <div class="cell views">${icon(2424, 1562, 110, 34, svg`<path d="M2425 1571h22M2425 1580h22M2425 1588.500h22" stroke="#bdbdbd" stroke-width="6" stroke-dasharray="6 2" /><rect x="2467" y="1568" width="22" height="15" rx="1" fill="#bdbdbd" /><path d="M2467 1588.500h22" stroke="#bdbdbd" stroke-width="5" stroke-dasharray="6 2" /><rect x="2509" y="1568" width="22" height="23" rx="2" fill="#666" />`)}</div>
      </div>`;
  }

  render() {
    return html`
      ${this.menubar()}
      <div class="desktop">
        <div class="titlebar">
          <div class="lights"><span class="light"></span><span class="light min"></span><span class="light max"></span></div>
          ${fit("Tableau Public - Book2", 280)}
        </div>
      </div>
      ${this.toolbar()}
      <div class="body">${this.dataPane()}${this.cards()}${this.main()}</div>
      ${this.footer()}
    `;
  }
}
